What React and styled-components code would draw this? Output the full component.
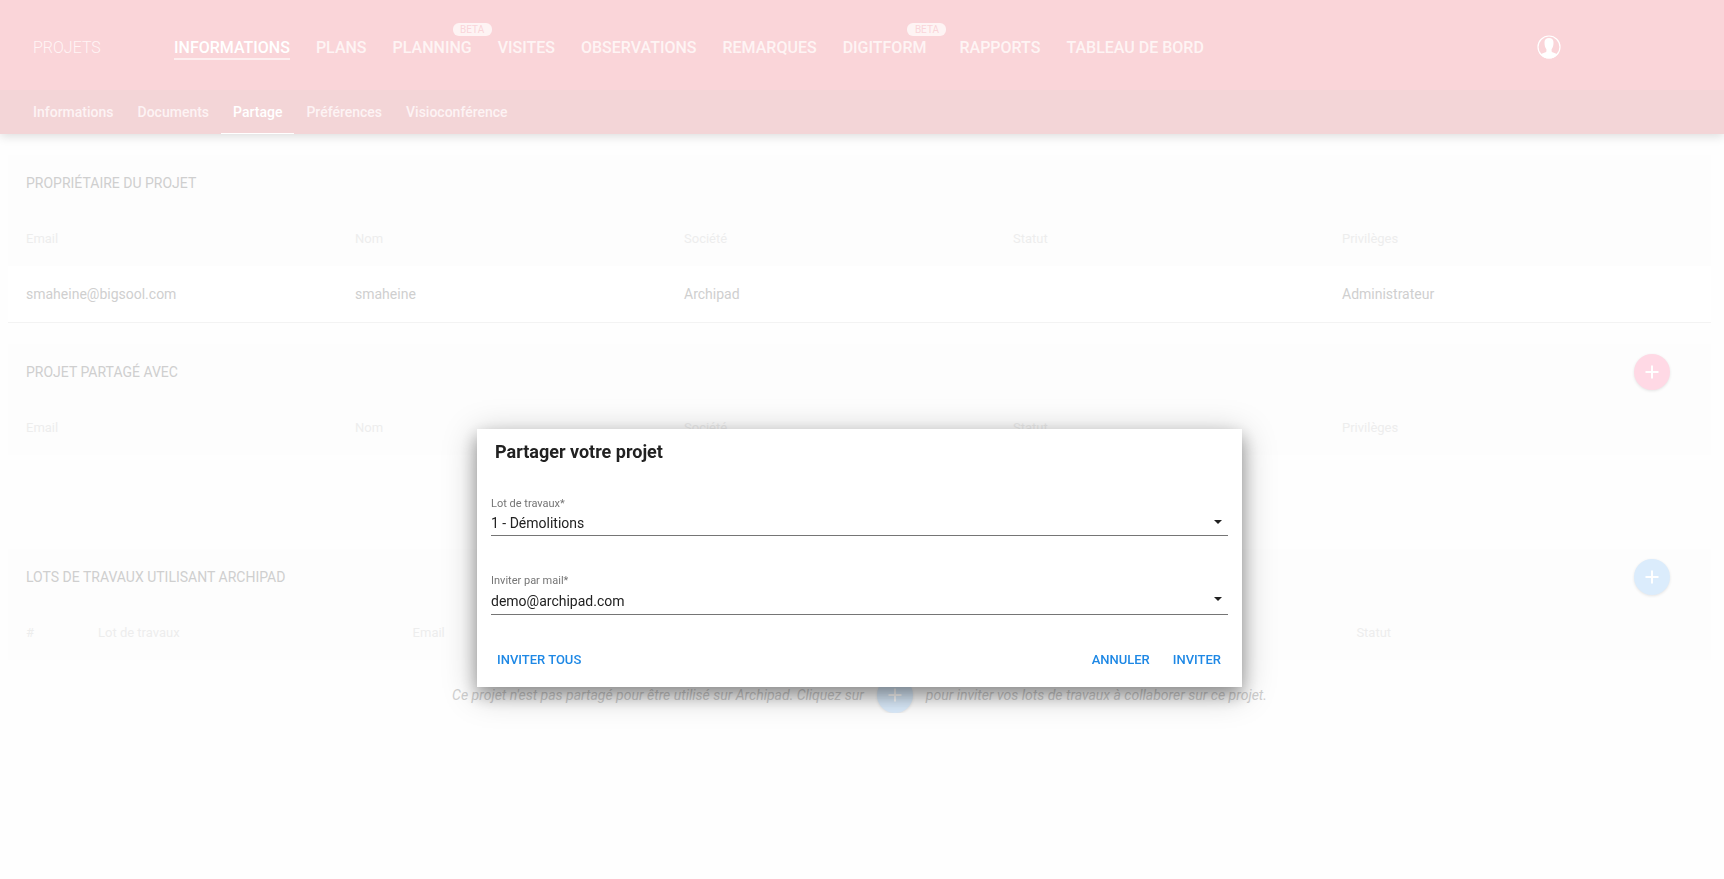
import { useState } from "react";
import styled, { createGlobalStyle } from "styled-components";

const GlobalStyle = createGlobalStyle`
  * {
    box-sizing: border-box;
  }
  body {
    margin: 0;
    background-color: #fefefe;
    font-family: Roboto, "Liberation Sans", sans-serif;
    font-size: 14px;
    color: #cfcfcf;
  }
  button, input, select {
    font-family: inherit;
    border: none;
    padding: 0;
    background: none;
  }
  button {
    cursor: pointer;
  }
  a {
    text-decoration: none;
  }
`;

const Header = styled.header`
  box-shadow: 0 2px 10px rgba(0, 0, 0, 0.14);
`;

const TopBar = styled.div`
  display: flex;
  align-items: center;
  height: 90px;
  padding: 4px 163px 0 33px;
  background-color: #fad5d9;
`;

const ProjectsLink = styled.a`
  width: 141px;
  font-size: 16px;
  font-weight: 300;
  color: #fff4f5;
`;

const Nav = styled.nav`
  display: flex;
  gap: 26px;
`;

const NavLink = styled.a`
  position: relative;
  font-size: 16px;
  font-weight: 500;
  line-height: 20px;
  white-space: nowrap;
  margin-right: ${({ $spaced }) => ($spaced ? "7px" : "0")};
  color: ${({ $active }) => ($active ? "#fff" : "#fef4f4")};
  border-top: 4px solid transparent;
  border-bottom: 2px solid
    ${({ $active }) => ($active ? "#fdeeef" : "transparent")};
`;

const Beta = styled.span`
  position: absolute;
  top: -15px;
  right: -20px;
  width: 39px;
  border-radius: 6px;
  background-color: #fef4f4;
  font-size: 10px;
  font-weight: 400;
  line-height: 13px;
  text-align: center;
  color: #fad5d9;
`;

const AccountButton = styled.button`
  display: flex;
  margin-left: auto;
`;

const SubNav = styled.nav`
  display: flex;
  height: 44px;
  padding-left: 21px;
  background-color: #f3d5d7;
`;

const Tab = styled.a`
  padding: 2px 12px 0;
  font-weight: 500;
  line-height: 41px;
  color: ${({ $active }) => ($active ? "#fff" : "#fdf3f4")};
  border-bottom: 1px solid ${({ $active }) => ($active ? "#fff" : "transparent")};
`;

const Main = styled.main`
  display: flex;
  flex-direction: column;
  gap: 21px;
  padding: 21px 13px 0 8px;
`;

const Section = styled.section`
  min-height: ${({ $tall }) => ($tall ? "184px" : "0")};
`;

const SectionHeader = styled.div`
  display: flex;
  align-items: center;
  justify-content: space-between;
  height: 56px;
  padding: 0 41px 0 18px;
  background-color: #fdfdfd;

  h2 {
    margin: 0;
    font-size: 14px;
    font-weight: 400;
  }
`;

const Table = styled.table`
  display: block;
  width: 100%;

  thead,
  tbody {
    display: block;
  }
`;

const Row = styled.tr`
  display: grid;
  grid-template-columns: ${({ $columns }) => $columns || "repeat(5, 1fr)"};
  align-items: center;
  height: 57px;
  padding: 0 40px 0 18px;
  background-color: #fff;
  border-bottom: 1px solid #f3f3f3;

  th,
  td {
    padding: 0;
    font-weight: 400;
    text-align: left;
  }
`;

const HeadRow = styled(Row)`
  height: 55px;
  background-color: #fdfdfd;
  border-bottom: none;
  font-size: 13px;
  color: #ededed;
`;

const Fab = styled.button`
  display: flex;
  align-items: center;
  justify-content: center;
  width: 36px;
  height: 36px;
  border-radius: 50%;
  background-color: ${({ $color }) => $color};
  box-shadow: 0 1px 3px rgba(0, 0, 0, 0.1);
`;

const Empty = styled.div`
  display: flex;
  align-items: center;
  justify-content: center;
  gap: 13px;
  padding-top: 17px;
  font-style: italic;
`;

const Overlay = styled.div`
  position: fixed;
  inset: 0;
  display: flex;
  align-items: flex-start;
  justify-content: center;
  padding: 429px 13px 0 8px;
`;

const Dialog = styled.div`
  width: 765px;
  max-width: 100%;
  background-color: #fff;
  color: #212121;
  box-shadow: 0 8px 16px rgba(0, 0, 0, 0.32), 0 6px 32px rgba(0, 0, 0, 0.26);
`;

const DialogTitle = styled.h1`
  margin: 0;
  padding: 0 18px;
  font-size: 18px;
  font-weight: 700;
  line-height: 46px;
`;

const Fields = styled.div`
  display: flex;
  flex-direction: column;
  gap: 37px;
  padding: 21px 14px 0;
`;

const Field = styled.div`
  label {
    display: block;
    font-size: 11px;
    line-height: 16px;
    color: #757575;
  }
`;

const Control = styled.div`
  position: relative;
`;

const Select = styled.select`
  display: block;
  appearance: none;
  width: 100%;
  height: 24px;
  padding-bottom: 2px;
  border-bottom: 1px solid #757575;
  border-radius: 0;
  font-size: 14px;
  color: #212121;
`;

const Input = styled.input`
  display: block;
  width: 100%;
  height: 26px;
  padding-bottom: 2px;
  border-bottom: 1px solid #757575;
  font-size: 14px;
  color: #212121;
`;

const Arrow = styled.svg`
  position: absolute;
  top: 8px;
  right: 6px;
  pointer-events: none;
`;

const Actions = styled.div`
  display: flex;
  gap: 11px;
  padding: 26px 15px 10px 14px;
`;

const Spacer = styled.div`
  flex: 1;
`;

const FlatButton = styled.button`
  height: 36px;
  padding: 0 6px;
  font-size: 13px;
  font-weight: 500;
  color: #1e88e5;
`;

const navItems = [
  { label: "INFORMATIONS", active: true },
  { label: "PLANS" },
  { label: "PLANNING", beta: true },
  { label: "VISITES" },
  { label: "OBSERVATIONS" },
  { label: "REMARQUES" },
  { label: "DIGITFORM", beta: true, spaced: true },
  { label: "RAPPORTS" },
  { label: "TABLEAU DE BORD" },
];

const tabs = [
  "Informations",
  "Documents",
  "Partage",
  "Préférences",
  "Visioconférence",
];

const userColumns = ["Email", "Nom", "Société", "Statut", "Privilèges"];
const owner = [
  "smaheine@bigsool.com",
  "smaheine",
  "Archipad",
  "",
  "Administrateur",
];

const PlusIcon = () => (
  <svg width="24" height="24" viewBox="0 0 24 24" aria-hidden="true">
    <path d="M18.5 13h-5.5v5.5h-2v-5.5h-5.5v-2h5.5v-5.500h2v5.500h5.500z" fill="#fff" />
  </svg>
);

const UserIcon = () => (
  <svg width="24" height="24" viewBox="0 0 24 24" aria-hidden="true">
    <circle cx="12" cy="12" r="11" fill="none" stroke="#fff" strokeWidth="1.2" />
    <path
      d="M12 3c-3 0-4.700 1.900-4.500 4.700 0 2.900.7 5.200 1.900 6.500v2.200c-.5 1.200-3.500 1.400-6 2.800 2 2.700 5 4.300 8.600 4.300s6.600-1.600 8.600-4.300c-2.500-1.400-5.500-1.600-6-2.800v-2.200c1.200-1.300 1.900-3.600 1.900-6.500.2-2.800-1.500-4.700-4.500-4.700z"
      fill="#fff"
    />
  </svg>
);

const ArrowIcon = () => (
  <Arrow width="8" height="4" viewBox="0 0 8 4" aria-hidden="true">
    <path d="M0 0h8l-4 4z" fill="#212121" />
  </Arrow>
);

const UserTable = ({ rows = [] }) => (
  <Table>
    <thead>
      <HeadRow>
        {userColumns.map((column) => (
          <th key={column}>{column}</th>
        ))}
      </HeadRow>
    </thead>
    <tbody>
      {rows.map((row) => (
        <Row key={row[0]}>
          {row.map((cell, i) => (
            <td key={userColumns[i]}>{cell}</td>
          ))}
        </Row>
      ))}
    </tbody>
  </Table>
);

const ShareDialog = () => {
  const [lot, setLot] = useState("1");
  const [mail, setMail] = useState("demo@archipad.com");

  return (
    <Overlay>
      <Dialog role="dialog" aria-labelledby="share-title">
        <DialogTitle id="share-title">Partager votre projet</DialogTitle>
        <Fields>
          <Field>
            <label htmlFor="lot">Lot de travaux*</label>
            <Control>
              <Select
                id="lot"
                value={lot}
                onChange={(e) => setLot(e.target.value)}
              >
                <option value="1">1 - Démolitions</option>
              </Select>
              <ArrowIcon />
            </Control>
          </Field>
          <Field>
            <label htmlFor="mail">Inviter par mail*</label>
            <Control>
              <Input
                id="mail"
                type="email"
                value={mail}
                onChange={(e) => setMail(e.target.value)}
              />
              <ArrowIcon />
            </Control>
          </Field>
        </Fields>
        <Actions>
          <FlatButton>INVITER TOUS</FlatButton>
          <Spacer />
          <FlatButton>ANNULER</FlatButton>
          <FlatButton>INVITER</FlatButton>
        </Actions>
      </Dialog>
    </Overlay>
  );
};

export default function App() {
  return (
    <>
      <GlobalStyle />
      <Header>
        <TopBar>
          <ProjectsLink href="#projets">PROJETS</ProjectsLink>
          <Nav>
            {navItems.map(({ label, active, beta, spaced }) => (
              <NavLink key={label} href="#" $active={active} $spaced={spaced}>
                {label}
                {beta && <Beta>BETA</Beta>}
              </NavLink>
            ))}
          </Nav>
          <AccountButton aria-label="Compte">
            <UserIcon />
          </AccountButton>
        </TopBar>
        <SubNav>
          {tabs.map((tab) => (
            <Tab key={tab} href="#" $active={tab === "Partage"}>
              {tab}
            </Tab>
          ))}
        </SubNav>
      </Header>

      <Main>
        <Section>
          <SectionHeader>
            <h2>PROPRIÉTAIRE DU PROJET</h2>
          </SectionHeader>
          <UserTable rows={[owner]} />
        </Section>

        <Section $tall>
          <SectionHeader>
            <h2>PROJET PARTAGÉ AVEC</h2>
            <Fab $color="#ffd9e5" aria-label="Partager le projet">
              <PlusIcon />
            </Fab>
          </SectionHeader>
          <UserTable />
        </Section>

        <Section>
          <SectionHeader>
            <h2>LOTS DE TRAVAUX UTILISANT ARCHIPAD</h2>
            <Fab $color="#dbecfc" aria-label="Inviter un lot">
              <PlusIcon />
            </Fab>
          </SectionHeader>
          <Table>
            <thead>
              <HeadRow $columns="72px 1fr 3fr 1fr">
                <th>#</th>
                <th>Lot de travaux</th>
                <th>Email</th>
                <th>Statut</th>
              </HeadRow>
            </thead>
          </Table>
          <Empty>
            <span>
              Ce projet n'est pas partagé pour être utilisé sur Archipad. Cliquez
              sur
            </span>
            <Fab $color="#dbecfc" aria-label="Inviter">
              <PlusIcon />
            </Fab>
            <span>
              pour inviter vos lots de travaux à collaborer sur ce projet.
            </span>
          </Empty>
        </Section>
      </Main>
      <ShareDialog />
    </>
  );
}
